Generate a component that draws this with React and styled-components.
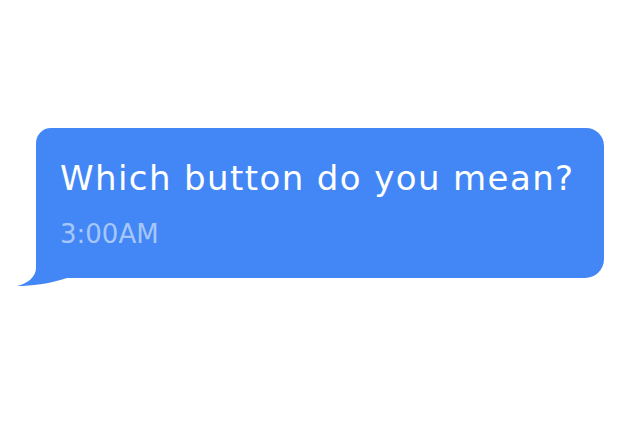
import React from 'react';
import styled, { createGlobalStyle } from 'styled-components';

const GlobalStyle = createGlobalStyle`
  html, body {
    margin: 0;
    padding: 0;
    background: #ffffff;
  }
  body {
    font-family: "DejaVu Sans", "Noto Sans", sans-serif;
  }
`;

const Page = styled.div`
  width: 640px;
  height: 441px;
  display: flex;
  align-items: flex-start;
  padding: 128px 36px 0 36px;
  box-sizing: border-box;
`;

const Bubble = styled.div`
  position: relative;
  width: 568px;
  height: 150px;
  box-sizing: border-box;
  background: ${({ $color }) => $color};
  border-radius: 15px 18px 19px 0;
  padding: 30px 24px 0 24px;
  display: flex;
  flex-direction: column;
  gap: 21px;
`;

const Tail = styled.svg`
  position: absolute;
  left: -19px;
  bottom: -9px;
  width: 55px;
  height: 32px;
  overflow: visible;
`;

const MessageText = styled.div`
  color: #ffffff;
  font-size: 34px;
  font-weight: 400;
  line-height: 40px;
  letter-spacing: 1.4px;
  white-space: nowrap;
`;

const Timestamp = styled.div`
  color: rgba(255, 255, 255, 0.55);
  font-size: 26px;
  font-weight: 400;
  line-height: 30px;
`;

const BLUE = '#4287f5';

const ChatBubble = ({ text, time }) => (
    <Bubble $color={BLUE}>
        <Tail viewBox="0 0 55 32">
            <path d="M19 0 L19 13 C19 22 10 29 0 31 C14 31 32 29 50 23 L50 0 Z" fill={BLUE} />
        </Tail>
        <MessageText>{text}</MessageText>
        <Timestamp>{time}</Timestamp>
    </Bubble>
);

const App = () => (
    <>
        <GlobalStyle />
        <Page>
            <ChatBubble text="Which button do you mean?" time="3:00AM" />
        </Page>
    </>
);

export default App;
